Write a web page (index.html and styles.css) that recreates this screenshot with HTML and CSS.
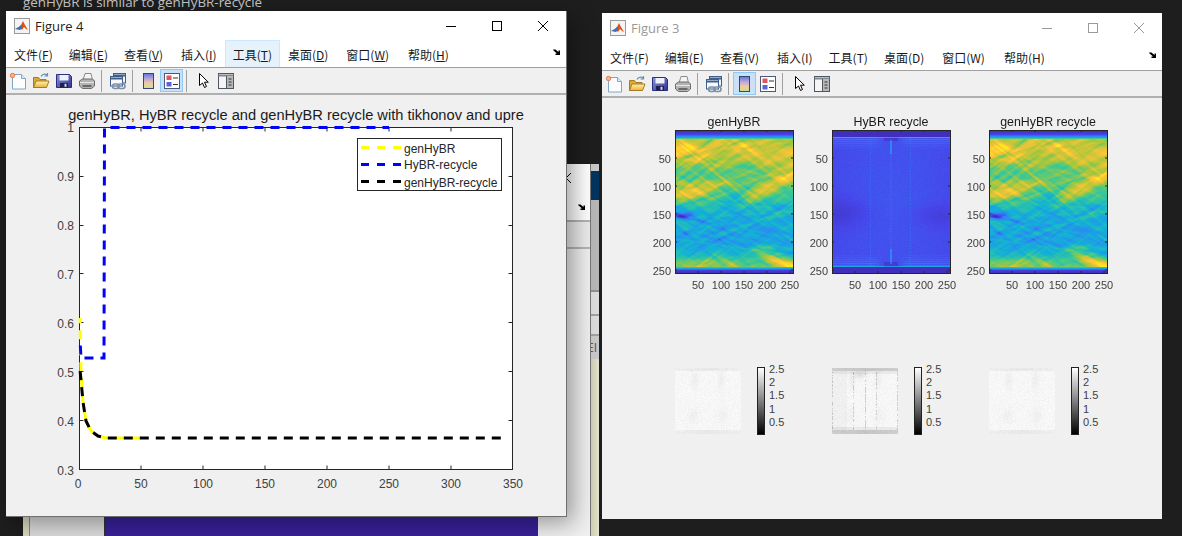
FILE: index.html
```html
<!DOCTYPE html>
<html lang="zh">
<head>
<meta charset="utf-8">
<title>Figures</title>
<link rel="stylesheet" href="styles.css">
</head>
<body>
<svg class="defs" width="0" height="0" aria-hidden="true">
  <defs>
    <linearGradient id="cbar" x1="0" y1="0" x2="0" y2="1">
      <stop offset="0" stop-color="#5a78d8"/><stop offset=".35" stop-color="#b9a6d8"/><stop offset=".65" stop-color="#f2c9a8"/><stop offset="1" stop-color="#c8e08c"/>
    </linearGradient>
    <linearGradient id="folder" x1="0" y1="0" x2="0" y2="1">
      <stop offset="0" stop-color="#fff2b0"/><stop offset="1" stop-color="#e8b23c"/>
    </linearGradient>
    <linearGradient id="floppy" x1="0" y1="0" x2="1" y2="1">
      <stop offset="0" stop-color="#8c90e0"/><stop offset="1" stop-color="#2c3490"/>
    </linearGradient>
    <symbol id="i-matlab" viewBox="0 0 16 16">
      <rect x=".5" y=".5" width="15" height="15" fill="#f4f4f4" stroke="#9a9a9a"/>
      <path d="M1 11l4-2 2-2 2-4 2 4 3 5-2-1-2-2-2 3-2-2z" fill="#d8531c"/>
      <path d="M1 11l4-2 2-2 1 3-2 2z" fill="#3a6fb8"/>
    </symbol>
    <symbol id="i-new" viewBox="0 0 18 18">
      <path d="M3.500 2.500h9l4 4v10.500h-13z" fill="#fdfdff" stroke="#7fa6c9"/>
      <path d="M12.500 2.500v4h4" fill="#dfeaf5" stroke="#7fa6c9"/>
      <circle cx="3.500" cy="3.500" r="2.200" fill="#f6b48a" stroke="#e4682e" stroke-width=".8"/>
    </symbol>
    <symbol id="i-open" viewBox="0 0 18 18">
      <path d="M1.500 5.500h5l1.500 2h6v8h-12.500z" fill="#d9a93a" stroke="#a87c1c"/>
      <path d="M1.500 15.500l2.500-6.500h13l-2.500 6.500z" fill="url(#folder)" stroke="#a87c1c"/>
      <path d="M9 4.500c1.500-2.500 4-3 6-1.500M15.500 1v3h-3" fill="none" stroke="#6b8eb4" stroke-width="1.200"/>
    </symbol>
    <symbol id="i-save" viewBox="0 0 18 18">
      <path d="M1.500 2.500h13l2 2v11h-15z" fill="url(#floppy)" stroke="#2a2f7e"/>
      <rect x="4.500" y="3" width="9" height="5.500" fill="#eef0fa"/>
      <rect x="5" y="11" width="8" height="4.500" fill="#20204e"/>
      <rect x="9.500" y="11.800" width="2" height="3" fill="#d8d8e8"/>
    </symbol>
    <symbol id="i-print" viewBox="0 0 18 18">
      <path d="M5 8l2-6.500h6l1.500 6.500z" fill="#f4f4f4" stroke="#8b8b8b"/>
      <path d="M1.500 9l3-2h10l2 2v5l-3 2.500h-9l-3-2.500z" fill="#b4b4b4" stroke="#6d6d6d"/>
      <path d="M2 10.500h14" stroke="#e6e6e6"/>
      <path d="M4.500 14h9" stroke="#505050" stroke-width="1.500"/>
    </symbol>
    <symbol id="i-link" viewBox="0 0 18 18">
      <rect x="4.500" y="1.500" width="12" height="9.500" fill="#eef3fa" stroke="#3f5f8a"/>
      <path d="M4.500 3.500h12" stroke="#3f5f8a" stroke-width="2"/>
      <rect x="1.500" y="4.500" width="12" height="9.500" fill="#f6f8fc" stroke="#3f5f8a"/>
      <path d="M1.500 6.500h12" stroke="#3f5f8a" stroke-width="2"/>
      <rect x="3.500" y="12" width="6.500" height="4.500" rx="2.200" fill="none" stroke="#7c8fa8" stroke-width="1.600"/>
      <rect x="9" y="12" width="7" height="4.500" rx="2.200" fill="none" stroke="#7c8fa8" stroke-width="1.600"/>
    </symbol>
    <symbol id="i-cbar" viewBox="0 0 18 18">
      <rect x="3.500" y="1.500" width="10" height="15" fill="url(#cbar)" stroke="#33457a"/>
    </symbol>
    <symbol id="i-legend" viewBox="0 0 18 18">
      <rect x="1.500" y="1.500" width="15" height="15" fill="#fff" stroke="#4a5a78"/>
      <rect x="3.500" y="3.500" width="5" height="4.500" fill="#e2555d"/>
      <rect x="3.500" y="10" width="5" height="4.500" fill="#5864d8"/>
      <path d="M10 6h5M10 12.500h5" stroke="#333" stroke-width="1.200"/>
    </symbol>
    <symbol id="i-cursor" viewBox="0 0 18 18">
      <path d="M4.500 1.500v12l3-2.500 2 4.500 2-1-2-4.300h3.800z" fill="#fff" stroke="#000"/>
    </symbol>
    <symbol id="i-panel" viewBox="0 0 18 18">
      <rect x="1.500" y="1.500" width="15" height="15" fill="#f4f4f4" stroke="#50565e"/>
      <path d="M1.500 3.500h15" stroke="#7d8894" stroke-width="2"/>
      <rect x="10" y="4.500" width="6" height="11.500" fill="#b8b8b8"/>
      <path d="M9.500 4v12" stroke="#50565e"/>
      <path d="M11.500 7h3M11.500 10h3M11.500 13h3" stroke="#333"/>
    </symbol>
    <symbol id="i-arrow" viewBox="0 0 8 7">
      <path d="M0 .5h2.500l3 2.500v-1.500h1.500v4.500h-4.500v-1.500h1.500l-3.500-3z" fill="#000"/>
    </symbol>
    <path id="heat-ticks" d="M698 273v-2M721 273v-2M744 273v-2M767 273v-2M790 273v-2M698 130v2M721 130v2M744 130v2M767 130v2M790 130v2M675 158h2M675 186h2M675 214h2M675 242h2M675 270h2M793 158h-2M793 186h-2M793 214h-2M793 242h-2M793 270h-2" stroke="#262626" fill="none"/>
  </defs>
</svg>

<main class="desktop">
  <p class="notice">genHyBR is similar to genHyBR-recycle</p>

  <section class="back-window">
    <div class="back-strip"></div>
    <div class="back-main">
      <div class="back-head">
        <svg class="back-close" width="10" height="10" viewBox="0 0 10 10"><path d="M0 0l10 10M10 0l-10 10" stroke="#000"/></svg>
        <svg class="overflow" width="8" height="7"><use href="#i-arrow"/></svg>
      </div>
      <div class="back-band"></div>
      <div class="back-body">
        <div class="back-gutter"></div>
        <div class="back-image"></div>
        <div class="back-tail"></div>
      </div>
    </div>
    <div class="back-side">
      <div class="side-grey"></div>
      <div class="side-navy"></div>
      <div class="side-mid"></div>
      <div class="side-row"></div>
      <div class="side-row side-row-b"></div>
      <div class="side-label">EI</div>
      <div class="side-cream"></div>
    </div>
  </section>

  <section class="window fig3">
    <header class="titlebar">
      <svg class="app-icon" width="16" height="16"><use href="#i-matlab"/></svg>
      <h1 class="win-title">Figure 3</h1>
      <div class="win-controls">
        <svg width="46" height="12" viewBox="0 0 46 12"><path d="M18 6.500h10" stroke="currentColor"/></svg>
        <svg width="46" height="12" viewBox="0 0 46 12"><rect x="18.500" y="1.500" width="9" height="9" fill="none" stroke="currentColor"/></svg>
        <svg width="46" height="12" viewBox="0 0 46 12"><path d="M18 1l10 10M28 1l-10 10" stroke="currentColor" fill="none"/></svg>
      </div>
    </header>
    <nav class="menubar">
      <span class="menu-item">文件(F)</span><span class="menu-item">编辑(E)</span><span class="menu-item">查看(V)</span><span class="menu-item">插入(I)</span><span class="menu-item">工具(T)</span><span class="menu-item">桌面(D)</span><span class="menu-item">窗口(W)</span><span class="menu-item">帮助(H)</span>
      <svg class="overflow menu-arrow" width="8" height="7"><use href="#i-arrow"/></svg>
    </nav>
    <div class="toolbar">
      <span class="tool"><svg width="18" height="18"><use href="#i-new"/></svg></span>
      <span class="tool"><svg width="18" height="18"><use href="#i-open"/></svg></span>
      <span class="tool"><svg width="18" height="18"><use href="#i-save"/></svg></span>
      <span class="tool"><svg width="18" height="18"><use href="#i-print"/></svg></span>
      <span class="tool-sep"></span>
      <span class="tool"><svg width="18" height="18"><use href="#i-link"/></svg></span>
      <span class="tool-sep"></span>
      <span class="tool tool-on"><svg width="18" height="18"><use href="#i-cbar"/></svg></span>
      <span class="tool"><svg width="18" height="18"><use href="#i-legend"/></svg></span>
      <span class="tool-sep"></span>
      <span class="tool tool-pointer"><svg width="18" height="18"><use href="#i-cursor"/></svg></span>
      <span class="tool"><svg width="18" height="18"><use href="#i-panel"/></svg></span>
    </div>
    <div class="fig-body plots">
      <div class="plot-row heat-row">
        <figure class="subplot">
          <canvas class="heat" width="118" height="143" data-kind="gen"></canvas>
          <svg class="overlay" width="157" height="180" viewBox="645 113 157 180">
            <rect x="675.500" y="130.500" width="118" height="143" fill="none" stroke="#262626"/>
            <use href="#heat-ticks"/>
            <text class="t-title" x="734" y="126">genHyBR</text>
            <g class="t-y"><text x="671" y="163">50</text><text x="671" y="191">100</text><text x="671" y="219">150</text><text x="671" y="247">200</text><text x="671" y="275">250</text></g>
            <g class="t-x"><text x="698" y="289">50</text><text x="721" y="289">100</text><text x="744" y="289">150</text><text x="767" y="289">200</text><text x="790" y="289">250</text></g>
          </svg>
        </figure>
        <figure class="subplot">
          <canvas class="heat" width="118" height="143" data-kind="recycle"></canvas>
          <svg class="overlay" width="157" height="180" viewBox="645 113 157 180">
            <rect x="675.500" y="130.500" width="118" height="143" fill="none" stroke="#262626"/>
            <use href="#heat-ticks"/>
            <text class="t-title" x="734" y="126">HyBR recycle</text>
            <g class="t-y"><text x="671" y="163">50</text><text x="671" y="191">100</text><text x="671" y="219">150</text><text x="671" y="247">200</text><text x="671" y="275">250</text></g>
            <g class="t-x"><text x="698" y="289">50</text><text x="721" y="289">100</text><text x="744" y="289">150</text><text x="767" y="289">200</text><text x="790" y="289">250</text></g>
          </svg>
        </figure>
        <figure class="subplot">
          <canvas class="heat" width="118" height="143" data-kind="gen"></canvas>
          <svg class="overlay" width="157" height="180" viewBox="645 113 157 180">
            <rect x="675.500" y="130.500" width="118" height="143" fill="none" stroke="#262626"/>
            <use href="#heat-ticks"/>
            <text class="t-title" x="734" y="126">genHyBR recycle</text>
            <g class="t-y"><text x="671" y="163">50</text><text x="671" y="191">100</text><text x="671" y="219">150</text><text x="671" y="247">200</text><text x="671" y="275">250</text></g>
            <g class="t-x"><text x="698" y="289">50</text><text x="721" y="289">100</text><text x="744" y="289">150</text><text x="767" y="289">200</text><text x="790" y="289">250</text></g>
          </svg>
        </figure>
      </div>
      <div class="plot-row gray-row">
        <figure class="graybox">
          <canvas class="gray" width="66" height="66" data-kind="gen"></canvas>
          <div class="colorbar"></div>
          <div class="cb-labels"><span>2.5</span><span>2</span><span>1.5</span><span>1</span><span>0.5</span></div>
        </figure>
        <figure class="graybox">
          <canvas class="gray" width="66" height="66" data-kind="recycle"></canvas>
          <div class="colorbar"></div>
          <div class="cb-labels"><span>2.5</span><span>2</span><span>1.5</span><span>1</span><span>0.5</span></div>
        </figure>
        <figure class="graybox">
          <canvas class="gray" width="66" height="66" data-kind="gen"></canvas>
          <div class="colorbar"></div>
          <div class="cb-labels"><span>2.5</span><span>2</span><span>1.5</span><span>1</span><span>0.5</span></div>
        </figure>
      </div>
    </div>
  </section>

  <section class="window fig4">
    <header class="titlebar">
      <svg class="app-icon" width="16" height="16"><use href="#i-matlab"/></svg>
      <h1 class="win-title">Figure 4</h1>
      <div class="win-controls">
        <svg width="46" height="12" viewBox="0 0 46 12"><path d="M18 6.500h10" stroke="currentColor"/></svg>
        <svg width="46" height="12" viewBox="0 0 46 12"><rect x="18.500" y="1.500" width="9" height="9" fill="none" stroke="currentColor"/></svg>
        <svg width="46" height="12" viewBox="0 0 46 12"><path d="M18 1l10 10M28 1l-10 10" stroke="currentColor" fill="none"/></svg>
      </div>
    </header>
    <nav class="menubar">
      <span class="menu-item">文件(<u>F</u>)</span><span class="menu-item">编辑(<u>E</u>)</span><span class="menu-item">查看(<u>V</u>)</span><span class="menu-item">插入(<u>I</u>)</span><span class="menu-item menu-hot">工具(<u>T</u>)</span><span class="menu-item">桌面(<u>D</u>)</span><span class="menu-item">窗口(<u>W</u>)</span><span class="menu-item">帮助(<u>H</u>)</span>
      <svg class="overflow menu-arrow" width="8" height="7"><use href="#i-arrow"/></svg>
    </nav>
    <div class="toolbar">
      <span class="tool"><svg width="18" height="18"><use href="#i-new"/></svg></span>
      <span class="tool"><svg width="18" height="18"><use href="#i-open"/></svg></span>
      <span class="tool"><svg width="18" height="18"><use href="#i-save"/></svg></span>
      <span class="tool"><svg width="18" height="18"><use href="#i-print"/></svg></span>
      <span class="tool-sep"></span>
      <span class="tool"><svg width="18" height="18"><use href="#i-link"/></svg></span>
      <span class="tool-sep"></span>
      <span class="tool"><svg width="18" height="18"><use href="#i-cbar"/></svg></span>
      <span class="tool tool-on"><svg width="18" height="18"><use href="#i-legend"/></svg></span>
      <span class="tool-sep"></span>
      <span class="tool tool-pointer"><svg width="18" height="18"><use href="#i-cursor"/></svg></span>
      <span class="tool"><svg width="18" height="18"><use href="#i-panel"/></svg></span>
    </div>
    <div class="fig-body">
      <svg class="line-plot" width="560" height="421" viewBox="6 95 560 421">
        <rect x="79.500" y="127.500" width="433" height="342" fill="#fff" stroke="#262626"/>
        <path d="M141 469.500v-4M203 469.500v-4M265 469.500v-4M327 469.500v-4M389 469.500v-4M451 469.500v-4M141 127.500v4M203 127.500v4M265 127.500v4M327 127.500v4M389 127.500v4M451 127.500v4M79.500 420.500h4M79.500 371.500h4M79.500 322.500h4M79.500 273.500h4M79.500 225.500h4M79.500 176.500h4M512.500 420.500h-4M512.500 371.500h-4M512.500 322.500h-4M512.500 273.500h-4M512.500 225.500h-4M512.500 176.500h-4" stroke="#262626" fill="none"/>
        <path class="curve curve-yellow" d="M80 318L81 372L83 402L86 421L91 431L98 436L106 438L141 438"/>
        <path class="curve curve-blue" d="M80 340L81 358L104 358L104.500 127.500L389 127.500"/>
        <path class="curve curve-black" d="M80 370L81 380L83 402L86 421L91 431L98 436L106 438L501 438"/>
        <text class="t-plot-title" x="296" y="120">genHyBR, HyBR recycle and genHyBR recycle with tikhonov and upre</text>
        <g class="t-ax-y">
          <text x="74" y="132">1</text><text x="74" y="181">0.9</text><text x="74" y="230">0.8</text><text x="74" y="279">0.7</text><text x="74" y="328">0.6</text><text x="74" y="377">0.5</text><text x="74" y="426">0.4</text><text x="74" y="475">0.3</text>
        </g>
        <g class="t-ax-x">
          <text x="78" y="488">0</text><text x="141" y="488">50</text><text x="203" y="488">100</text><text x="265" y="488">150</text><text x="327" y="488">200</text><text x="389" y="488">250</text><text x="451" y="488">300</text><text x="513" y="488">350</text>
        </g>
        <rect x="357.500" y="138.500" width="144" height="52" fill="#fff" stroke="#262626"/>
        <path class="key key-yellow" d="M361 147.500h41"/>
        <path class="key key-blue" d="M361 164.500h41"/>
        <path class="key key-black" d="M361 181.500h41"/>
        <text class="t-legend" x="404" y="153">genHyBR</text>
        <text class="t-legend" x="404" y="169">HyBR-recycle</text>
        <text class="t-legend" x="404" y="187">genHyBR-recycle</text>
      </svg>
    </div>
  </section>
</main>
<script src="heatmaps.js"></script>
</body>
</html>
```

FILE: styles.css
```css
* { box-sizing: border-box; }
html, body { margin: 0; padding: 0; background: #1e1e1e; }
.defs { position: absolute; }
.desktop { position: relative; width: 1182px; height: 536px; overflow: hidden; background: #1e1e1e; font-family: "Liberation Sans", Arial, sans-serif; }

.notice { position: absolute; left: 23px; top: -7px; margin: 0; color: #c8c8c8; font: 13.400px/18px "Open Sans", sans-serif; }

/* window partly hidden behind the figures */
.back-window { position: absolute; left: 23px; top: 164px; width: 576px; height: 372px; display: flex; }
.back-strip { width: 7px; background: #d9d9bf; border-right: 1px solid #8a8a78; }
.back-main { width: 561px; display: flex; flex-direction: column; background: #efefef; border-right: 1px solid #777; }
.back-head { height: 58px; background: #fff; border-bottom: 2px solid #b4b4b4; position: relative; }
.back-close { position: absolute; right: 19px; top: 9px; }
.back-head .overflow { position: absolute; right: 4px; top: 40px; }
.back-band { height: 27px; background: #ececec; border-bottom: 2px solid #b4b4b4; }
.back-body { flex: 1; display: flex; align-items: flex-end; }
.back-gutter { width: 75px; height: 100%; background: linear-gradient(180deg, #e8e8e8, #dcdcdc); border-right: 1px solid #333; }
.back-image { width: 433px; height: 100%; background: #38219a; }
.back-tail { flex: 1; height: 100%; background: #f0f0f0; }
.back-side { width: 8px; display: flex; flex-direction: column; background: #b9b9b9; }
.side-grey { height: 7px; background: #c8c8c8; }
.side-navy { height: 29px; background: #03345f; }
.side-mid { height: 92px; background: #b7b7b7; border-bottom: 2px solid #8f8f8f; }
.side-row { height: 24px; background: #dcdcdc; border-bottom: 2px solid #a0a0a0; }
.side-row-b { height: 20px; }
.side-label { height: 23px; background: #c9c9c9; color: #44566e; font: 12px/23px "Open Sans", sans-serif; overflow: hidden; text-indent: -4px; }
.side-cream { flex: 1; background: linear-gradient(90deg, #cfcfb2, #e2e2cf); }

/* figure windows */
.window { position: absolute; width: 560px; display: flex; flex-direction: column; background: #f0f0f0; }
.fig4 { left: 6px; top: 11px; width: 561px; height: 506px; border-right: 1px solid #6f6f6f; border-bottom: 1px solid #6f6f6f; box-shadow: 6px 6px 22px rgba(0, 0, 0, .38); }
.fig3 { left: 602px; top: 13px; height: 506px; }
.titlebar { height: 29px; display: flex; align-items: center; padding-left: 8px; background: #fff; color: #000; }
.fig3 .titlebar { height: 30px; color: #9a9a9a; }
.app-icon { flex: none; }
.win-title { margin: 0 0 0 5px; font: 400 13px "Open Sans", sans-serif; }
.fig3 .win-title { color: #999; }
.fig4 .win-title { color: #222; }
.win-controls { margin-left: auto; display: flex; }
.win-controls svg { display: block; }

.menubar { height: 28px; background: #fff; border-bottom: 1px solid #a0a0a0; display: flex; align-items: stretch; font: 12px "Noto Sans CJK SC", sans-serif; color: #1a1a1a; }
.menu-item { padding: 0 7px; display: flex; align-items: center; white-space: pre; border: 1px solid transparent; border-bottom: 0; }
.menu-item:nth-child(3), .menu-item:nth-child(6) { padding-right: 9px; }
.menu-item:nth-child(7) { padding-right: 10px; }
.menu-item u { text-underline-offset: 1px; }
.menu-hot { background: #e5f1fb; border-color: #cce8ff; }
.menu-arrow { margin: 9px 5px 0 auto; }
.toolbar { height: 27px; background: #f0f0f0; border-bottom: 2px solid #b0b0b0; display: flex; align-items: center; }
.tool { width: 23px; height: 23px; display: flex; align-items: center; justify-content: center; border: 1px solid transparent; }
.tool svg { display: block; }
.tool-on { background: #c9e0f7; border-color: #90c8f6; }
.tool-pointer { width: 21px; margin-left: 2px; }
.tool-sep { width: 1px; height: 22px; margin: 0 4px 0 3px; background: #a0a0a0; }
.fig-body { flex: 1; min-height: 0; }
.line-plot { display: block; }

/* subplots */
.plots { display: flex; flex-direction: column; padding: 15px 0 0 43px; }
.plot-row { display: flex; margin: 0; }
.subplot { position: relative; width: 157px; height: 180px; margin: 0; flex: none; }
.heat { position: absolute; left: 30px; top: 17px; display: block; }
.overlay { position: absolute; left: 0; top: 0; overflow: visible; }
.gray-row { margin-top: 74px; }
.graybox { width: 157px; height: 70px; margin: 0; flex: none; display: flex; align-items: flex-start; padding-left: 30px; }
.gray { display: block; margin-top: 1px; }
.colorbar { width: 8px; height: 68px; margin-left: 16px; border: 1px solid #222; background: linear-gradient(#fff, #000); }
.cb-labels { margin: -4.500px 0 0 4px; display: flex; flex-direction: column; font: 11px/13.400px "Liberation Sans", sans-serif; color: #404040; }

/* svg text */
svg text { font-family: "Liberation Sans", Arial, sans-serif; fill: #303030; }
.t-title { font-size: 12.400px; text-anchor: middle; fill: #1a1a1a; }
.t-y text { font-size: 11px; text-anchor: end; fill: #404040; }
.t-x text { font-size: 11px; text-anchor: middle; fill: #404040; }
.t-plot-title { font-size: 14.650px; text-anchor: middle; fill: #1a1a1a; }
.t-ax-y text { font-size: 12px; text-anchor: end; fill: #404040; }
.t-ax-x text { font-size: 12px; text-anchor: middle; fill: #404040; }
.t-legend { font-size: 12px; fill: #262626; }

.curve { fill: none; stroke-width: 3; stroke-dasharray: 9 7; }
.curve-yellow { stroke: #ffff00; stroke-dashoffset: -12.300; }
.curve-blue { stroke: #0000ff; stroke-dashoffset: -5.500; }
.curve-black { stroke: #000; stroke-dashoffset: -1.200; }
.key { fill: none; stroke-width: 3; stroke-dasharray: 8 8; }
.key-yellow { stroke: #ffff00; }
.key-blue { stroke: #0000ff; }
.key-black { stroke: #000; }
```

FILE: heatmaps.js
```js
// Procedural stand-ins for the MATLAB image data shown in Figure 3.
function rng(seed) {
  var s = seed;
  return function () { s = (s * 1664525 + 1013904223) >>> 0; return s / 4294967296; };
}
var PARULA = [[0, 62, 38, 168], [.12, 70, 70, 235], [.25, 45, 135, 245], [.4, 18, 177, 214], [.55, 55, 200, 151], [.7, 171, 199, 57], [.85, 254, 195, 56], [1, 249, 251, 21]];
function parula(v) {
  v = Math.max(0, Math.min(1, v));
  for (var i = 1; i < PARULA.length; i++) {
    if (v <= PARULA[i][0]) {
      var a = PARULA[i - 1], b = PARULA[i], f = (v - a[0]) / (b[0] - a[0]);
      return [a[1] + (b[1] - a[1]) * f, a[2] + (b[2] - a[2]) * f, a[3] + (b[3] - a[3]) * f];
    }
  }
  return PARULA[PARULA.length - 1].slice(1);
}
function lerpKnots(k, t) {
  for (var i = 1; i < k.length; i++) {
    if (t <= k[i][0]) {
      var f = (t - k[i - 1][0]) / (k[i][0] - k[i - 1][0]);
      return k[i - 1][1] + (k[i][1] - k[i - 1][1]) * f;
    }
  }
  return k[k.length - 1][1];
}
function gauss(x, y, cx, cy, sx, sy) {
  var dx = (x - cx) / sx, dy = (y - cy) / sy;
  return Math.exp(-dx * dx - dy * dy);
}
function smooth(a, b, x) {
  var f = Math.max(0, Math.min(1, (x - a) / (b - a)));
  return f * f * (3 - 2 * f);
}
var PROFILE = [[0, .03], [.03, .1], [.05, .3], [.065, .72], [.14, .8], [.22, .72], [.3, .6], [.42, .58], [.5, .5], [.58, .42], [.7, .38], [.8, .36], [.88, .46], [.94, .6], [.955, .66], [.965, .42], [.98, .1], [1, .03]];
var streakRand = rng(17);
var STREAKS = [];
for (var n = 0; n < 260; n++) {
  STREAKS.push({
    t0: streakRand() * 1.2 - .1,
    s: (streakRand() - .5) * 1.5,
    a: (streakRand() - .5) * .11,
    w: .005 + streakRand() * .012
  });
}
function genValue(u, t) {
  var v = lerpKnots(PROFILE, t);
  if (t <= .06 || t >= .955) return v;
  v += .3 * gauss(u, t, .06, .44, .2, .055);
  v += .1 * gauss(u, t, .06, .15, .16, .05);
  v += .2 * Math.exp(-Math.pow((t - (.55 - .5 * (u - .5))) / .06, 2)) * smooth(.45, .7, u);
  v += .16 * gauss(u, t, .3, .38, .18, .035);
  v -= .12 * gauss(u, t, .52, .5, .14, .09);
  v -= .28 * gauss(u, t, .05, .6, .11, .028);
  v -= .07 * gauss(u, t, .8, .62, .18, .05);
  v += .3 * Math.exp(-Math.pow((t - (.88 + .28 * (u - .75))) / .035, 2)) * smooth(.6, .85, u);
  v += .16 * gauss(u, t, .75, .825, .14, .02);
  v += .1 * gauss(u, t, .3, .92, .3, .03);
  v -= .08 * gauss(u, t, .62, .26, .18, .025);
  for (var i = 0; i < STREAKS.length; i++) {
    var s = STREAKS[i], d = (t - (s.t0 + s.s * (u - .5))) / s.w;
    if (Math.abs(d) < 3) v += s.a * Math.exp(-d * d);
  }
  return v;
}
function recycleValue(u, t, r) {
  if (t < .05 || t > .955) return .035;
  var v = .125 + (r() - .5) * .02;
  v += .025 * Math.abs(Math.cos((u - .5) * 3)) * (1 - Math.abs(t - .5));
  v -= .05 * gauss(u, t, .08, .58, .22, .1);
  v -= .035 * gauss(u, t, .9, .6, .2, .08);
  var edge = Math.min(t - .05, .955 - t);
  var x = Math.floor(u * 118), y = Math.floor(t * 143);
  if (edge < .09) v += (y % 2 ? .09 : .02) * (1 - edge / .09) * smooth(.1, .3, Math.abs(u - .5) * 2);
  if (edge < .007) v += .2;
  if ((x === 38 || x === 78) && y % 3) v += .035;
  if (x === 58 || x === 59) v += (y % 2 ? .03 : 0) + (edge < .12 && edge > .02 ? .1 : 0);
  if (edge < .03 && Math.abs(u - .5) < .06) v -= .06;
  return v;
}
function drawHeat(cv) {
  var ctx = cv.getContext('2d'), W = cv.width, H = cv.height;
  var img = ctx.createImageData(W, H), r = rng(5);
  for (var y = 0; y < H; y++) {
    for (var x = 0; x < W; x++) {
      var u = (x + .5) / W, t = (y + .5) / H;
      var v = cv.dataset.kind === 'gen' ? genValue(u, t) : recycleValue(u, t, r);
      var c = parula(v), i = (y * W + x) * 4;
      img.data[i] = c[0]; img.data[i + 1] = c[1]; img.data[i + 2] = c[2]; img.data[i + 3] = 255;
    }
  }
  ctx.putImageData(img, 0, 0);
}
function drawGray(cv) {
  var ctx = cv.getContext('2d'), W = cv.width, H = cv.height;
  var img = ctx.createImageData(W, H), r = rng(cv.dataset.kind === 'gen' ? 9 : 23);
  var recycle = cv.dataset.kind === 'recycle';
  for (var y = 0; y < H; y++) {
    for (var x = 0; x < W; x++) {
      var u = (x + .5) / W, t = (y + .5) / H;
      var g = 246 + r() * 9 - 4;
      var band = t < .05 || t > .94;
      if (band) {
        g = (recycle ? 192 : 226) + r() * 10 + 16 * Math.abs(u - .5);
      } else {
        g -= 9 * gauss(Math.abs(u - .5), t, .2, .18, .05, .14);
        g -= 7 * gauss(Math.abs(u - .5), t, .22, .72, .08, .12);
        if (recycle) {
          if (t < .09 || t > .9) g -= 14;
          if ((x === 0 || x === 65 || x === 21 || x === 33 || x === 44) && r() > .35) g -= 38;
          if (u < .22) g -= 7;
          g -= 22 * gauss(u, t, .42, .1, .1, .06);
        }
      }
      var i = (y * W + x) * 4;
      img.data[i] = img.data[i + 1] = img.data[i + 2] = Math.min(255, g); img.data[i + 3] = 255;
    }
  }
  ctx.putImageData(img, 0, 0);
}
document.querySelectorAll('canvas.heat').forEach(drawHeat);
document.querySelectorAll('canvas.gray').forEach(drawGray);
```
